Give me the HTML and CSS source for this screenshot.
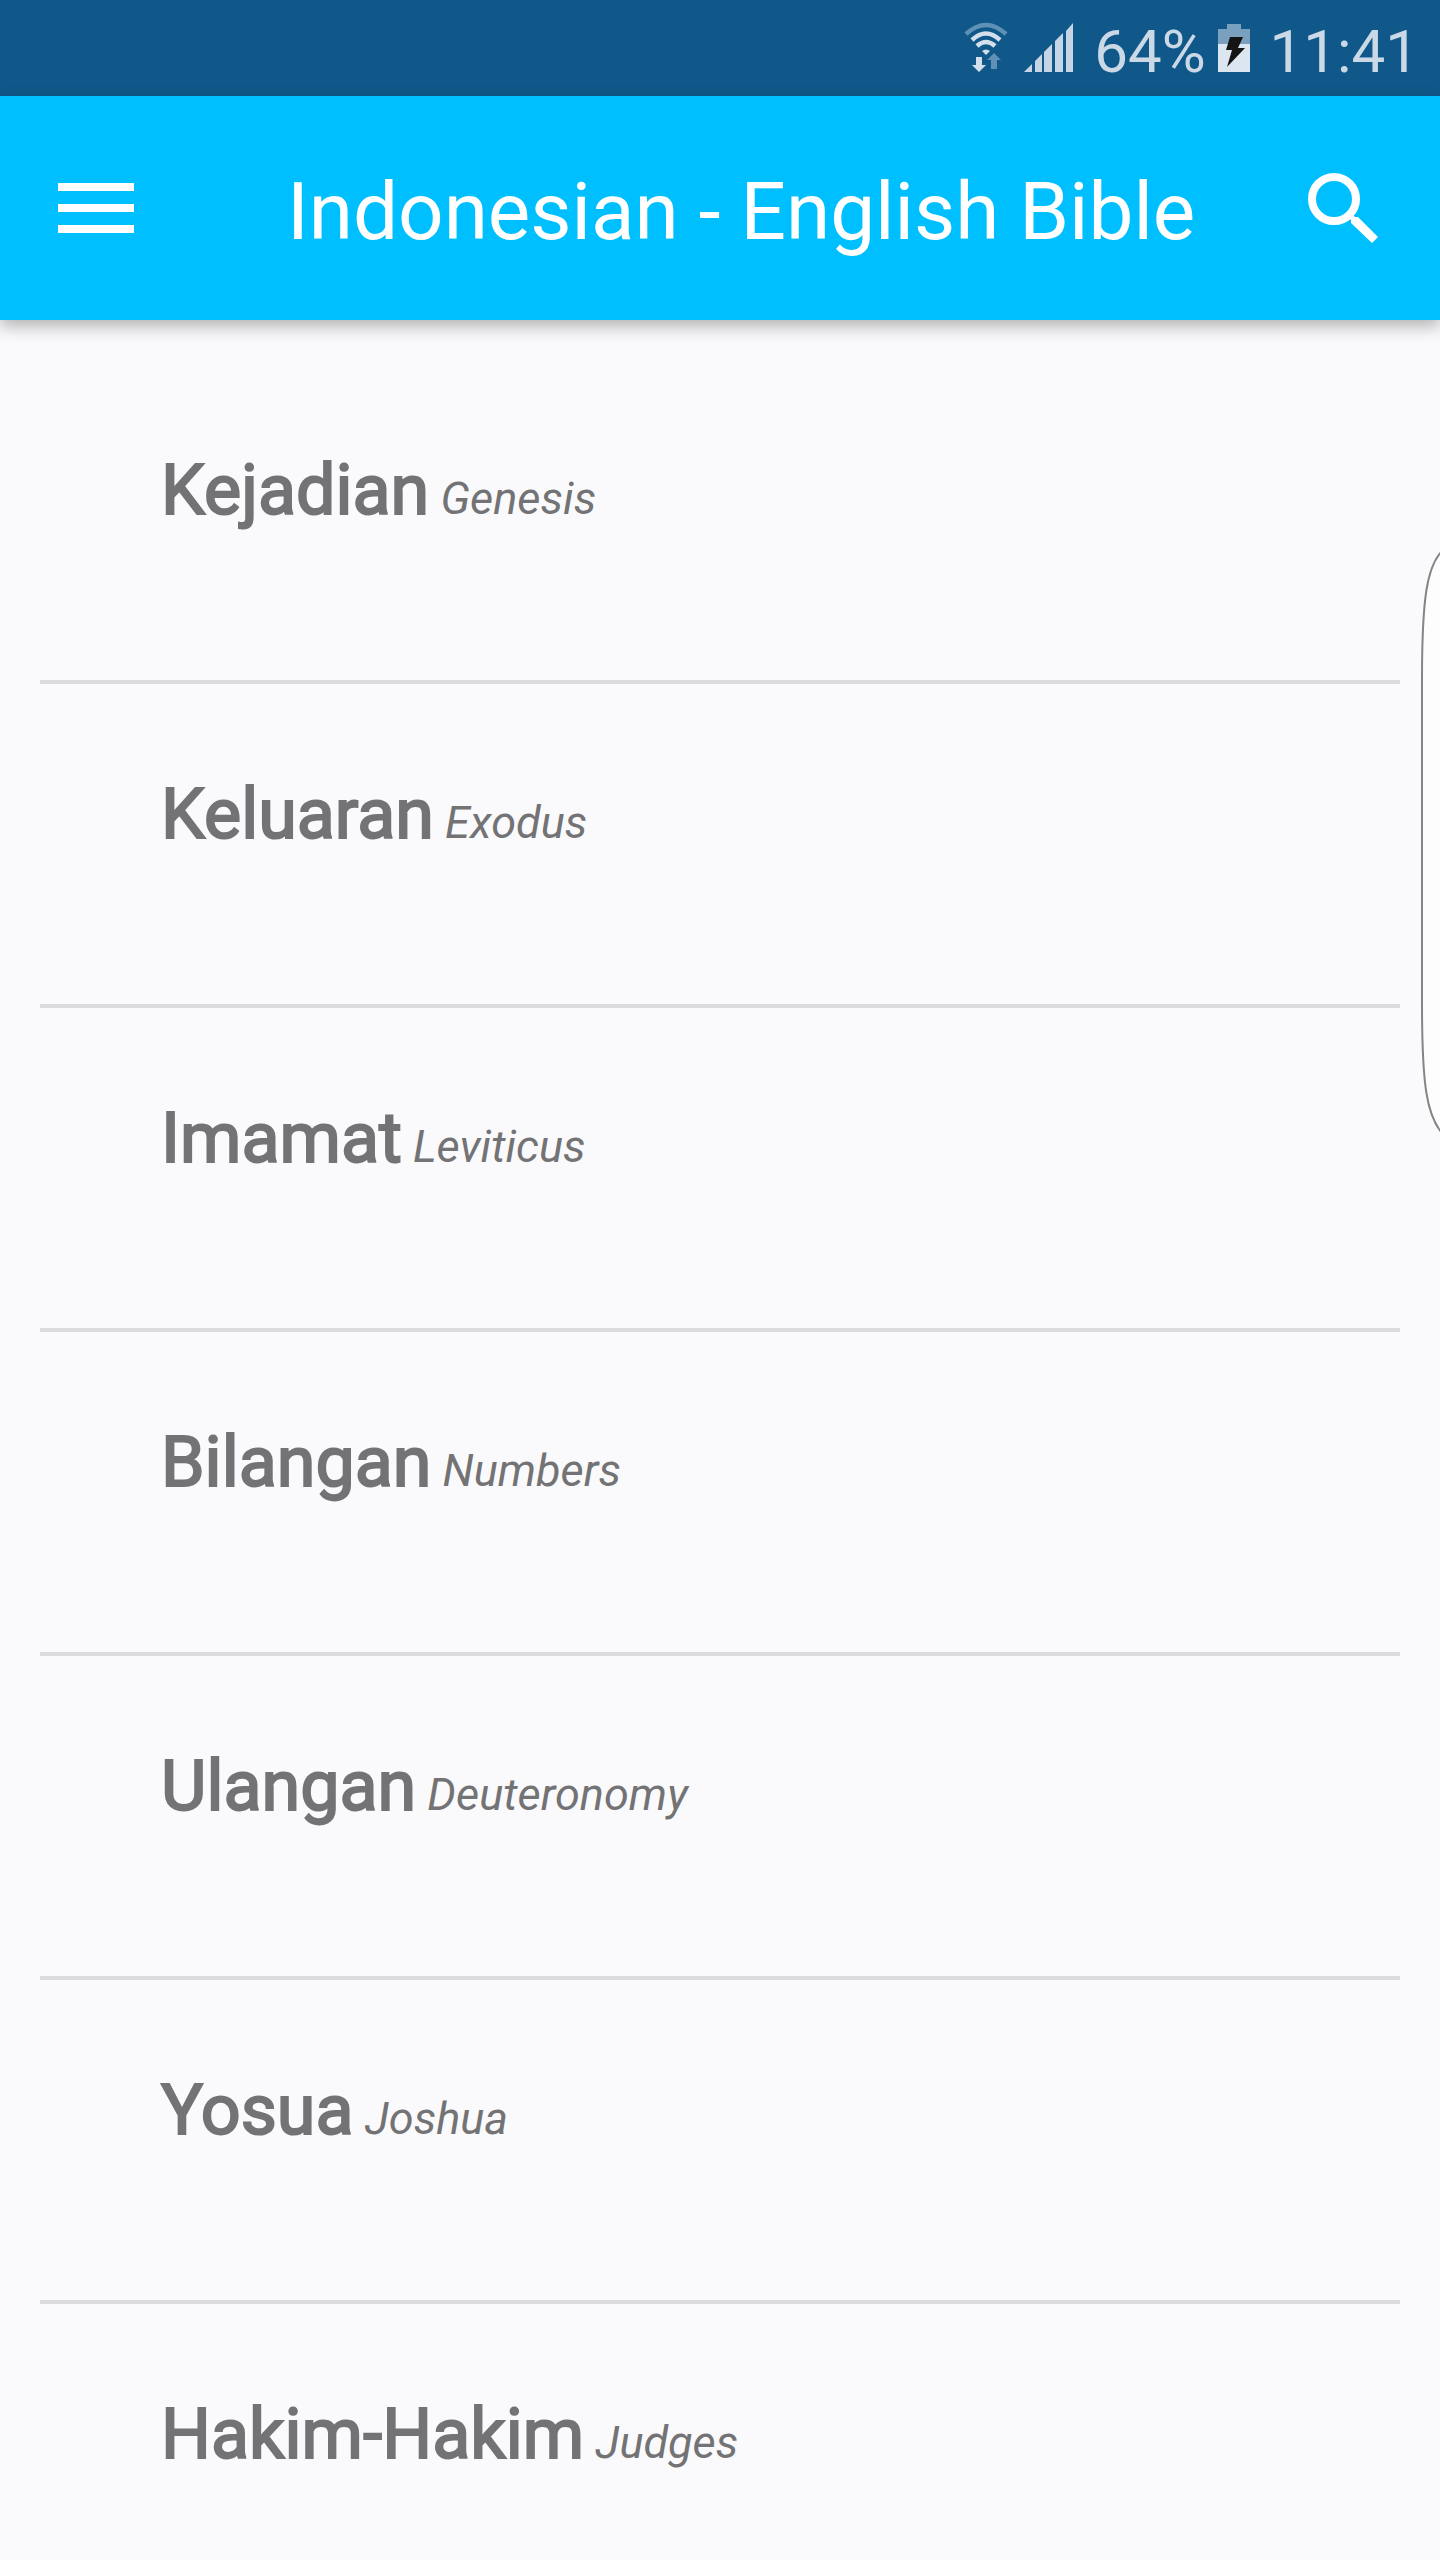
FILE: index.html
```html
<!DOCTYPE html>
<html lang="id">
<head>
<meta charset="utf-8">
<meta name="viewport" content="width=device-width, initial-scale=1">
<title>Indonesian - English Bible</title>
<link rel="stylesheet" href="styles.css">
</head>
<body>
<div class="status-bar">
  <svg class="wifi" width="44" height="52" viewBox="0 0 44 52" aria-hidden="true">
    <g fill="none" stroke="#d3dfeb" stroke-width="4.5">
      <path d="M2 12Q22-6 42 12" stroke="#5f90b6"/>
      <path d="M8 18Q22 5 36 18"/>
      <path d="M13 24Q22 16 31 24"/>
    </g>
    <path d="M18 29Q22 26 26 29L22 33Z" fill="#d3dfeb"/>
    <path d="M12 35h6v8h4l-7 7-7-7h4z" fill="#d3dfeb"/>
    <path d="M27 47v-9h-4l7-7 7 7h-4v9z" fill="#5f90b6"/>
  </svg>
  <svg class="signal" width="50" height="50" viewBox="0 0 50 50" aria-hidden="true">
    <path fill="#c5d5e5" d="M0 49L8 41V49ZM11 38L18 31V49H11ZM20 29L28 21V49H20ZM31 18L39 10V49H31ZM42 8L49 0V49H42Z"/>
  </svg>
  <span class="percent">64%</span>
  <svg class="battery" width="32" height="48" viewBox="0 0 32 48" aria-hidden="true">
    <path fill="#7aa0bf" d="M9 0h14v5h9v15H0V5h9z"/>
    <path fill="#dbe6f0" d="M0 20h32v28H0z"/>
    <path fill="#141414" d="M12 13h13l-5 11h7L9 43l5-17H8z"/>
  </svg>
  <time class="clock">11:41</time>
</div>
<header class="app-bar">
  <button class="icon-button" type="button" aria-label="Menu">
    <svg width="76" height="50" viewBox="0 0 76 50"><path fill="#fff" d="M0 0h76v8H0zM0 21h76v8H0zM0 42h76v8H0z"/></svg>
  </button>
  <h1 class="title">Indonesian - English Bible</h1>
  <button class="icon-button" type="button" aria-label="Search">
    <svg width="70" height="70" viewBox="0 0 70 70"><circle cx="26" cy="26" r="22" fill="none" stroke="#fff" stroke-width="8"/><path fill="#fff" d="M43 50V47L41 45L45 42L47 44H50L70 64L64 70Z"/></svg>
  </button>
</header>
<main class="content">
  <ul class="books">
    <li class="book"><a class="book-link" href="#kejadian"><span class="name">Kejadian</span> <i class="english">Genesis</i></a></li>
    <li class="book"><a class="book-link" href="#keluaran"><span class="name">Keluaran</span> <i class="english">Exodus</i></a></li>
    <li class="book"><a class="book-link" href="#imamat"><span class="name">Imamat</span> <i class="english">Leviticus</i></a></li>
    <li class="book"><a class="book-link" href="#bilangan"><span class="name">Bilangan</span> <i class="english">Numbers</i></a></li>
    <li class="book"><a class="book-link" href="#ulangan"><span class="name">Ulangan</span> <i class="english">Deuteronomy</i></a></li>
    <li class="book"><a class="book-link" href="#yosua"><span class="name">Yosua</span> <i class="english">Joshua</i></a></li>
    <li class="book"><a class="book-link" href="#hakim"><span class="name">Hakim-Hakim</span> <i class="english">Judges</i></a></li>
  </ul>
</main>
<svg class="edge-handle" width="20" height="584" viewBox="0 0 20 584" aria-hidden="true">
  <path d="M21 2C7 18 2 48 2 130V454C2 536 7 564 21 582" fill="#fdfdfe" stroke="#858587" stroke-width="2"/>
</svg>
</body>
</html>
```
FILE: styles.css
```css
* { box-sizing: border-box; }

body {
  margin: 0;
  height: 100vh;
  display: flex;
  flex-direction: column;
  overflow: hidden;
  background: #fafafc;
  color: #737375;
  font-family: Roboto, sans-serif;
}

.status-bar {
  flex: none;
  height: 96px;
  padding: 0 21px;
  display: flex;
  align-items: center;
  justify-content: flex-end;
  background: #10588a;
  color: #cbd9e7;
  font-size: 60px;
  line-height: 72px;
}

.status-bar svg { flex: none; }
.wifi { margin-right: 16px; }
.signal { margin-right: 20px; }
.percent { margin-right: 12px; padding-top: 8px; }
.battery { margin-right: 20px; }
.clock { padding-top: 8px; }

.app-bar {
  flex: none;
  height: 224px;
  padding: 0 62px 0 58px;
  display: flex;
  align-items: center;
  position: relative;
  background: #00bfff;
  color: #fff;
  box-shadow: 0 6px 16px rgba(0, 0, 0, 0.3);
}

.icon-button {
  flex: none;
  padding: 0;
  border: 0;
  background: none;
  display: flex;
}

.title {
  flex: 1;
  margin: 0 0 0 153px;
  padding-top: 8px;
  font-size: 80px;
  font-weight: 400;
  line-height: 96px;
}

.content {
  flex: 1;
  min-height: 0;
  overflow: hidden;
  padding: 40px 40px 0;
}

.books {
  margin: 0;
  padding: 0;
  list-style: none;
}

.book { border-bottom: 4px solid #dcdcde; }

.book-link {
  display: block;
  height: 320px;
  padding: 88px 121px 0;
  color: inherit;
  text-decoration: none;
  font-size: 45px;
  line-height: 84px;
}

.name {
  font-size: 70px;
  -webkit-text-stroke: 2px currentColor;
}

.edge-handle {
  position: fixed;
  top: 550px;
  right: 0;
}
```
